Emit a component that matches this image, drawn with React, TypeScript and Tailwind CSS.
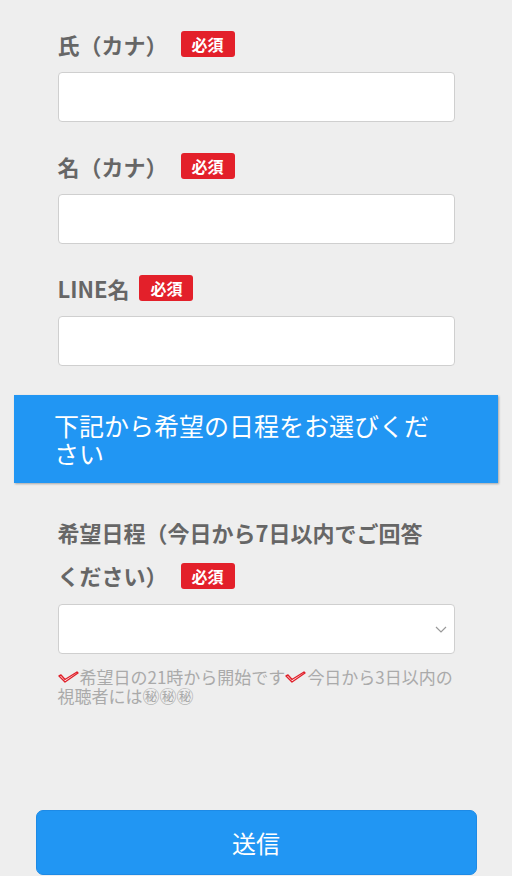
const font = { fontFamily: '"Noto Sans CJK JP", "Noto Sans", sans-serif' };

function Badge({ gap = 'ml-[13px]' }: { gap?: string }) {
    return (
        <span className={`${gap} inline-flex h-[26px] w-[54px] items-center justify-center rounded-[3px] bg-[#e3202a] text-[16px] font-bold leading-none text-white`}>
            必須
        </span>
    );
}

function Field({ label, gap }: { label: string; gap?: string }) {
    return (
        <div className="flex flex-col">
            <div className="flex items-center text-[22px] font-bold leading-[44px] text-[#666]">
                <span>{label}</span>
                <Badge gap={gap} />
            </div>
            <input
                type="text"
                className="mt-[6px] h-[50px] w-full rounded-[4px] border border-[#cfcfcf] bg-white px-3 outline-none"
            />
        </div>
    );
}

function Check() {
    return (
        <svg width="21" height="12" viewBox="0 0 21 12" className="mr-[1px] inline-block align-[1px]">
            <path
                d="M1 5 L3 4 L7 8.5 L19 1 L20 2 L7 11 Z"
                fill="white"
                stroke="#e0202a"
                strokeWidth="1.4"
                strokeLinejoin="round"
            />
        </svg>
    );
}

export default function App() {
    return (
        <div className="min-h-[876px] w-full overflow-hidden bg-[#eeeeee] pt-[22px]" style={font}>
            <div className="mx-auto flex w-[397px] flex-col gap-[22px]">
                <Field label="氏（カナ）" />
                <Field label="名（カナ）" />
                <Field label="LINE名" gap="ml-[10px]" />
            </div>

            {/* banner */}
            <div className="mx-[14px] mt-[29px] bg-[#2196f3] py-4 pl-10 pr-[56px] text-[25px] leading-[28px] text-white shadow-[1px_1px_2px_rgba(0,0,0,0.3)]">
                下記から希望の日程をお選びください
            </div>

            <div className="mx-auto mt-[28px] flex w-[397px] flex-col">
                <div className="text-[22px] font-bold leading-[43px] text-[#666]">
                    希望日程（今日から7日以内でご回答
                    <br />
                    <span className="inline-flex items-center">
                        ください）
                        <Badge />
                    </span>
                </div>
                <div className="relative mt-[7px] h-[50px] w-full rounded-[4px] border border-[#cfcfcf] bg-white">
                    <svg width="12" height="8" viewBox="0 0 12 8" className="absolute right-[7px] top-[21px]">
                        <path d="M1 1 L6 6 L11 1" fill="none" stroke="#999" strokeWidth="1.2" />
                    </svg>
                </div>
                <p className="mt-[13px] text-[17px] leading-[19px] text-[#aaaaaa]">
                    <Check />希望日の21時から開始です<Check />今日から3日以内の
                    <br />
                    視聴者には㊙㊙㊙
                </p>
            </div>

            <div className="mx-auto mt-[105px] w-[441px]">
                <button className="flex h-[65px] w-full items-center justify-center rounded-[7px] border border-[#1d8ae6] bg-[#2196f3] text-[24px] text-white">
                    送信
                </button>
            </div>
        </div>
    );
}
